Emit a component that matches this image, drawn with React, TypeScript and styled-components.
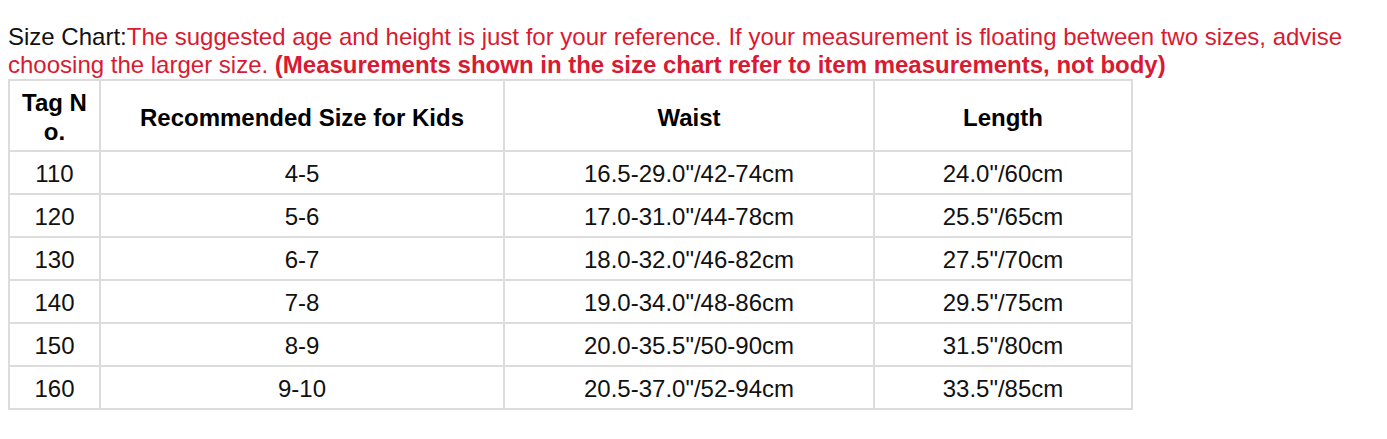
import React from "react";
import styled, { createGlobalStyle } from "styled-components";

const Global = createGlobalStyle`
  html, body { margin: 0; padding: 0; background: #fff; }
  body { font-family: "Liberation Sans", Arial, sans-serif; }
`;

const Page = styled.div`
  padding: 23px 8px 0 8px;
  font-family: "Liberation Sans", Arial, sans-serif;
`;

const Intro = styled.p`
  margin: 0;
  font-size: 24px;
  line-height: 28px;
  color: #111;
`;

const Red = styled.span<{ $bold?: boolean }>`
  color: #d91a32;
  font-weight: ${(p) => (p.$bold ? 700 : 400)};
`;

const Table = styled.table`
  border-collapse: collapse;
  table-layout: fixed;
  width: 1123px;
  font-size: 24px;
  color: #111;
`;

const Col = styled.col<{ $w: number }>`
  width: ${(p) => p.$w}px;
`;

const HeadCell = styled.th`
  box-sizing: border-box;
  height: 71px;
  border: 2px solid #dcdcdc;
  padding: 3px 6px 0;
  font-weight: 700;
  line-height: 29px;
  text-align: center;
  vertical-align: middle;
  word-break: break-all;
  color: #000;
`;

const Cell = styled.td`
  box-sizing: border-box;
  height: 43px;
  border: 2px solid #dcdcdc;
  padding: 3px 6px 0;
  text-align: center;
  vertical-align: middle;
  line-height: 28px;
`;

const cols = [
  { label: "Tag No.", w: 91 },
  { label: "Recommended Size for Kids", w: 404 },
  { label: "Waist", w: 370 },
  { label: "Length", w: 258 },
];

const rows = [
  ["110", "4-5", "16.5-29.0\"/42-74cm", "24.0\"/60cm"],
  ["120", "5-6", "17.0-31.0\"/44-78cm", "25.5\"/65cm"],
  ["130", "6-7", "18.0-32.0\"/46-82cm", "27.5\"/70cm"],
  ["140", "7-8", "19.0-34.0\"/48-86cm", "29.5\"/75cm"],
  ["150", "8-9", "20.0-35.5\"/50-90cm", "31.5\"/80cm"],
  ["160", "9-10", "20.5-37.0\"/52-94cm", "33.5\"/85cm"],
];

export default function App() {
  return (
    <Page>
      <Global />
      <Intro>
        Size Chart:
        <Red>
          The suggested age and height is just for your reference. If your measurement is floating between two sizes, advise choosing the larger size.{" "}
        </Red>
        <Red $bold>(Measurements shown in the size chart refer to item measurements, not body)</Red>
      </Intro>
      <Table>
        <colgroup>
          {cols.map((c) => (
            <Col key={c.label} $w={c.w} />
          ))}
        </colgroup>
        <thead>
          <tr>
            {cols.map((c) => (
              <HeadCell key={c.label}>{c.label}</HeadCell>
            ))}
          </tr>
        </thead>
        <tbody>
          {rows.map((r) => (
            <tr key={r[0]}>
              {r.map((v, i) => (
                <Cell key={i}>{v}</Cell>
              ))}
            </tr>
          ))}
        </tbody>
      </Table>
    </Page>
  );
}
